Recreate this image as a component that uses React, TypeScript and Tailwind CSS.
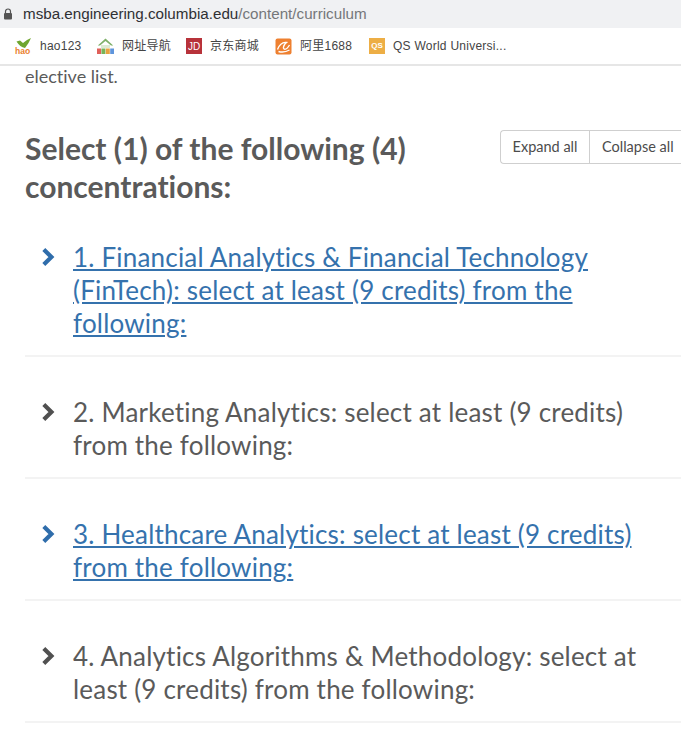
import React from 'react';

const sans = 'font-["Lato","Open_Sans",sans-serif] [font-variant-ligatures:none]';

const Chevron = ({ color }: { color: string }) => (
  <svg width="14" height="18" viewBox="0 0 14 18" className="shrink-0">
    <path d="M2.8 1.6 L10.4 9 L2.8 16.4" fill="none" stroke={color} strokeWidth="4.2" />
  </svg>
);

const Hao = () => (
  <svg width="17" height="18" viewBox="0 0 17 18">
    <path d="M1.5 4.5 L5 3.5 L8 6 Q11 3 16 1 Q14 6 10 11 Q5 10 1.5 4.5 Z" fill="#6fa62f" />
    <text x="0" y="17" fontSize="8.5" fontWeight="700" fill="#ea7f2e" fontFamily="Liberation Sans">hao</text>
  </svg>
);

const Home2345 = () => (
  <svg width="17" height="18" viewBox="0 0 17 18">
    <path d="M0.8 8.5 L8.5 1.5 L16.2 8.5 L14 8.5 L8.5 4 L3 8.5 Z" fill="#7fb069" />
    <rect x="4" y="8" width="9" height="3" fill="#dcead2" />
    <rect x="0" y="11.5" width="4" height="5.5" fill="#e0605a" />
    <rect x="4.4" y="11.5" width="4" height="5.5" fill="#78b457" />
    <rect x="8.8" y="11.5" width="4" height="5.5" fill="#e8a23f" />
    <rect x="13.2" y="11.5" width="3.8" height="5.5" fill="#5f95dc" />
  </svg>
);

const Jd = () => (
  <div className="w-[16px] h-[16px] bg-[#b7323a] flex items-center justify-center text-white text-[10px] font-['Liberation_Sans',sans-serif]">
    JD
  </div>
);

const Ali = () => (
  <svg width="17" height="17" viewBox="0 0 17 17">
    <rect x="0.5" y="0.5" width="16" height="16" rx="2" fill="#ee8030" />
    <path d="M2.5 11.5 C4.5 6.5 8 4 11.5 4.5 C9 6.5 7.5 10 9 11 C10.5 11.8 13 9.5 14.5 7 M3.5 13.5 C7 14.5 11 14 14.5 12" fill="none" stroke="#fff" strokeWidth="1.4" />
  </svg>
);

const Qs = () => (
  <div className="w-[16px] h-[16px] bg-[#edae45] flex items-center justify-center text-white text-[8px] font-bold font-['Liberation_Sans',sans-serif]">
    QS
  </div>
);

const bookmarks = [
  { icon: <Hao />, label: 'hao123', width: 'w-[82px]' },
  { icon: <Home2345 />, label: '网址导航', width: 'w-[89px]' },
  { icon: <Jd />, label: '京东商城', width: 'w-[89px]' },
  { icon: <Ali />, label: '阿里1688', width: 'w-[94px]' },
  { icon: <Qs />, label: 'QS World Universi...', width: 'w-[150px]' },
];

const rows = [
  { text: '1. Financial Analytics & Financial Technology (FinTech): select at least (9 credits) from the following:', link: true },
  { text: '2. Marketing Analytics: select at least (9 credits) from the following:', link: false },
  { text: '3. Healthcare Analytics: select at least (9 credits) from the following:', link: true },
  { text: '4. Analytics Algorithms & Methodology: select at least (9 credits) from the following:', link: false },
];

export default function App() {
  return (
    <div className={`w-[681px] h-[729px] overflow-hidden bg-white ${sans}`}>
      {/* address bar */}
      <div className="h-[28px] bg-[#f0f1f3] flex items-center pl-[3px] text-[15.2px] font-['Liberation_Sans',sans-serif]">
        <svg width="10" height="12" viewBox="0 0 10 12" className="mr-[10px]">
          <path d="M2.5 5 V3.5 a2.5 2.5 0 0 1 5 0 V5" fill="none" stroke="#555" strokeWidth="1.2" />
          <rect x="1" y="5" width="8" height="6.5" rx="1" fill="#555" />
        </svg>
        <span className="text-[#2f3033]">msba.engineering.columbia.edu</span>
        <span className="text-[#75777a]">/content/curriculum</span>
      </div>

      {/* bookmarks */}
      <div className="h-[38px] border-b-2 border-[#e6e6e6] flex items-center pl-[15px] text-[12px] text-[#444]">
        {bookmarks.map((b) => (
          <div key={b.label} className={`flex items-center gap-[8px] ${b.width}`}>
            {b.icon}
            <span className="font-['Liberation_Sans','Noto_Sans_CJK_SC',sans-serif] tracking-[0.25px] whitespace-nowrap">{b.label}</span>
          </div>
        ))}
      </div>

      {/* page */}
      <div className="pl-[25px] text-[#5a5a5a]">
        <p className="text-[18px] leading-[24px] -mt-[2px]">elective list.</p>

        <div className="flex justify-between mt-[42px]">
          <h2 className="text-[30px] leading-[38px] font-bold w-[440px] text-[#5a5a5a] -mt-[1px]">
            Select (1) of the following (4) concentrations:
          </h2>
          <div className="flex h-[34px] border border-[#cfcfcf] border-r-0 rounded-l-[4px] text-[14.5px] text-[#4c4c4c] w-[181px] shrink-0">
            <div className="w-[89px] flex items-center justify-center border-r border-[#cfcfcf]">Expand all</div>
            <div className="flex-1 flex items-center pl-[12px] whitespace-nowrap">Collapse all</div>
          </div>
        </div>

        <div className="-mt-[3px]">
          {rows.map((r) => (
            <div key={r.text} className="flex border-b-2 border-[#f3f3f3] pt-[39px] pb-[15px] pr-[34px]">
              <div className="w-[48px] pt-[7px] pl-[16px] shrink-0 flex">
                <Chevron color={r.link ? '#2f6dab' : '#505050'} />
              </div>
              <div className={`text-[26px] leading-[33px] tracking-[0.2px] ${r.link ? 'text-[#3572ad] underline' : 'text-[#5a5a5a]'}`}>
                {r.text}
              </div>
            </div>
          ))}
        </div>
      </div>
    </div>
  );
}
